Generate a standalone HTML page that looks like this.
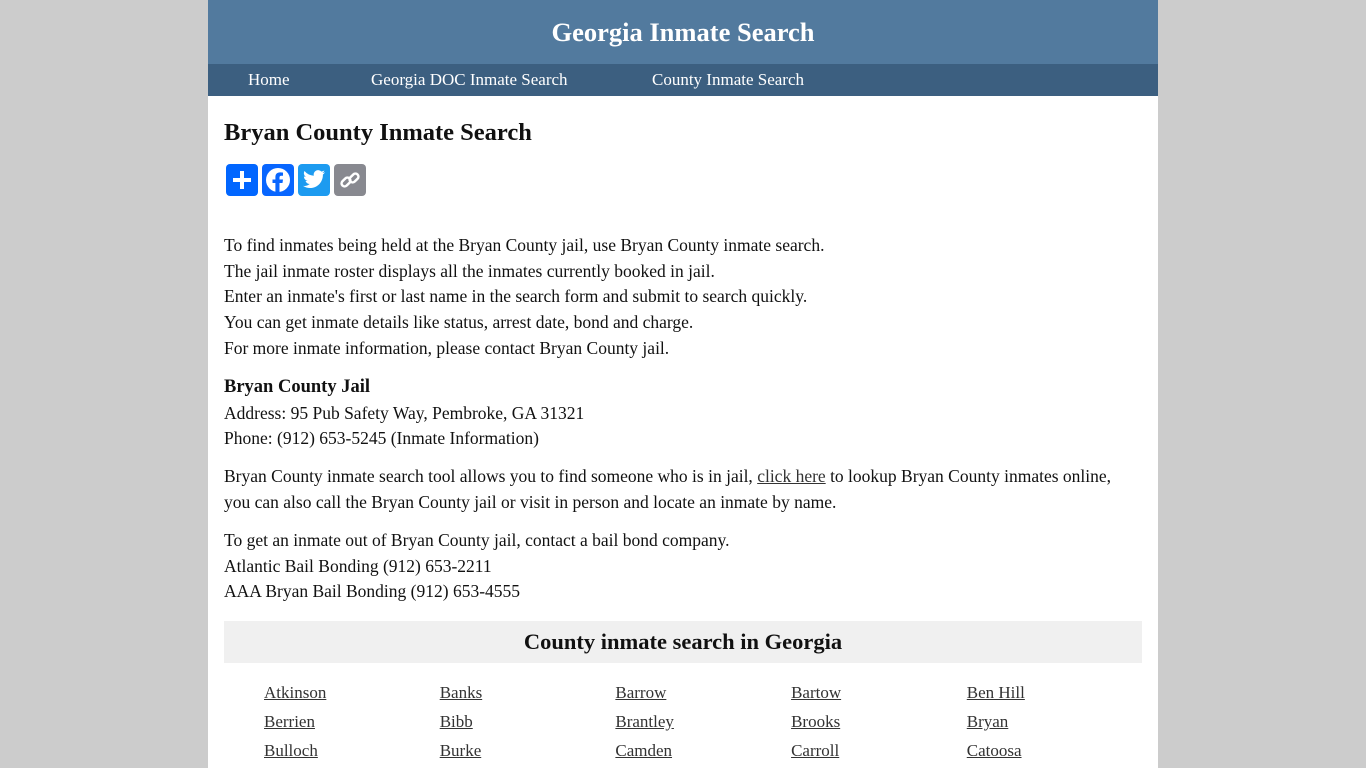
<!DOCTYPE html>
<html><head><meta charset="utf-8"><style>
html,body{margin:0;padding:0}
body{background:#ccc;font-family:"Liberation Serif","DejaVu Serif",serif;color:#111;height:768px;overflow:hidden}
.wrap{position:absolute;left:208px;width:950px;top:0;height:768px;background:#fff}
.hd{height:64px;background:#527a9e;color:#fff;text-align:center;font-weight:bold;font-size:26.5px;line-height:64px}
.nav{height:32px;background:#3c5f80;color:#fff;font-size:17px;line-height:32px;position:relative}
.nav span{position:absolute;top:0}
h1{font-size:24.5px;margin:0;position:absolute;top:119px;left:16px}
.sh{position:absolute;top:164px;left:18px;display:flex;gap:4px}
.sh div{width:32px;height:32px;border-radius:4px;display:flex;align-items:center;justify-content:center}
.p{position:absolute;left:16px;line-height:25.7px;font-size:17.5px}
a{color:#333}
.bar{position:absolute;left:16px;top:621px;width:918px;height:42px;background:#f0f0f0;text-align:center;font-weight:bold;font-size:22.5px;line-height:42px}
.g{position:absolute;top:681px;left:56px;width:880px;font-size:17px}
.g div{display:grid;grid-template-columns:175.7px 175.7px 175.7px 175.7px 175.7px;height:29px;line-height:24px}
</style></head><body><div class="wrap">
<div class="hd">Georgia Inmate Search</div>
<div class="nav"><span style="left:40px">Home</span><span style="left:163px">Georgia DOC Inmate Search</span><span style="left:444px">County Inmate Search</span></div>
<h1>Bryan County Inmate Search</h1>
<div class="sh">
<div style="background:#0166ff"><svg width="22" height="22"><path d="M11 2v18M2 11h18" stroke="#fff" stroke-width="4"/></svg></div>
<div style="background:#0866ff"><svg width="26" height="26" viewBox="0 0 26 26"><circle cx="13" cy="13" r="12" fill="#fff"/><path d="M14.5 26V16h3l.5-3.5h-3.5V10.5c0-1 .4-1.8 1.9-1.8H18V5.6c-.4 0-1.6-.2-3-.2-3 0-4.6 1.7-4.6 4.8v2.3H7.5V16h2.9v10z" fill="#0866ff"/></svg></div>
<div style="background:#1d9bf0"><svg width="24" height="20" viewBox="0 0 24 20"><path d="M23 2.3c-.8.4-1.7.6-2.6.7.9-.6 1.6-1.4 2-2.5-.9.5-1.9.9-2.9 1.1A4.5 4.5 0 0 0 11.8 5.7 12.8 12.8 0 0 1 2.5 1 4.5 4.5 0 0 0 3.9 7a4.4 4.4 0 0 1-2-.6c0 2.2 1.5 4 3.6 4.4-.7.2-1.4.2-2 .1a4.5 4.5 0 0 0 4.2 3.1A9 9 0 0 1 1 15.9 12.8 12.8 0 0 0 8 18c8.3 0 12.9-6.9 12.9-12.9v-.6c.9-.6 1.6-1.4 2.1-2.2z" fill="#fff"/></svg></div>
<div style="background:#888990"><svg width="22" height="22" viewBox="0 0 22 22"><g fill="none" stroke="#fff" stroke-width="2.5"><rect x="2" y="10" width="10" height="6" rx="3" transform="rotate(-45 7 13)"/><rect x="10" y="6" width="10" height="6" rx="3" transform="rotate(-45 15 9)"/></g></svg></div>
</div>
<div class="p" style="top:233px">To find inmates being held at the Bryan County jail, use Bryan County inmate search.<br>The jail inmate roster displays all the inmates currently booked in jail.<br>Enter an inmate's first or last name in the search form and submit to search quickly.<br>You can get inmate details like status, arrest date, bond and charge.<br>For more inmate information, please contact Bryan County jail.</div>
<div class="p" style="top:374px"><b style="font-size:18.5px">Bryan County Jail</b><br>Address: 95 Pub Safety Way, Pembroke, GA 31321<br>Phone: (912) 653-5245 (Inmate Information)</div>
<div class="p" style="top:464px;width:912px">Bryan County inmate search tool allows you to find someone who is in jail, <a href="#">click here</a> to lookup Bryan County inmates online, you can also call the Bryan County jail or visit in person and locate an inmate by name.</div>
<div class="p" style="top:528px">To get an inmate out of Bryan County jail, contact a bail bond company.<br>Atlantic Bail Bonding (912) 653-2211<br>AAA Bryan Bail Bonding (912) 653-4555</div>
<div class="bar">County inmate search in Georgia</div>
<div class="g">
<div><a href="#">Atkinson</a><a href="#">Banks</a><a href="#">Barrow</a><a href="#">Bartow</a><a href="#">Ben Hill</a></div>
<div><a href="#">Berrien</a><a href="#">Bibb</a><a href="#">Brantley</a><a href="#">Brooks</a><a href="#">Bryan</a></div>
<div><a href="#">Bulloch</a><a href="#">Burke</a><a href="#">Camden</a><a href="#">Carroll</a><a href="#">Catoosa</a></div>
</div>
</div></body></html>
